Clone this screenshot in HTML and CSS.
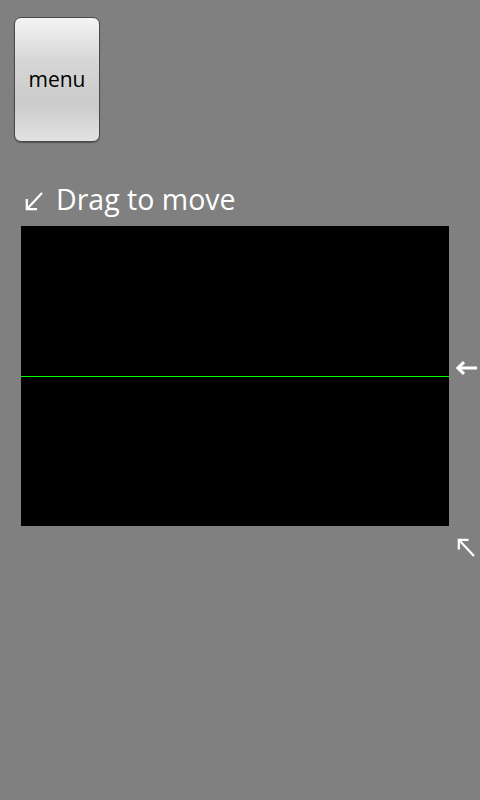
FILE: index.html
```html
<!DOCTYPE html>
<html lang="en">
<head>
    <meta charset="UTF-8">
    <meta name="viewport" content="width=device-width, initial-scale=1.0">
    <title>Drag to move</title>
    <link rel="stylesheet" href="styles.css">
</head>
<body>

<button class="menu-btn">menu</button>

<div class="drag-title">
    <svg class="drag-arrow" width="18" height="19" viewBox="0 0 18 19">
        <path d="M17 1 L2.5 16.5" />
        <path d="M1.8 7 V17.2 H12" />
    </svg>
    <span>Drag to move</span>
</div>

<div class="scope">
    <div class="screen">
        <div class="trace"></div>
    </div>
    <svg class="handle handle-side" width="21" height="14" viewBox="0 0 21 14">
        <path d="M3 7 H21" />
        <path class="head" d="M8 1.2 L2 7 L8 12.8" />
    </svg>
    <svg class="handle handle-corner" width="18" height="19" viewBox="0 0 18 19">
        <path d="M17 18 L2.5 2.5" />
        <path d="M1.8 11.5 V1.8 H11.5" />
    </svg>
</div>

</body>
</html>
```

FILE: styles.css
```css
:root {
    --page-bg: #808080;
    --text-light: #ffffff;
    --trace: #00ff00;
}

body {
    margin: 0;
    padding: 17px 0 0 14px;
    background-color: var(--page-bg);
    font-family: 'Open Sans', 'DejaVu Sans', sans-serif;
    color: var(--text-light);
    min-height: 800px;
    box-sizing: border-box;
}

.menu-btn {
    display: block;
    width: 86px;
    height: 125px;
    padding: 0 0 2px;
    border: 1px solid #4a4a4a;
    border-radius: 7px;
    background: linear-gradient(#f4f4f4 0%, #d6d6d6 35%, #cbcbcb 70%, #e2e2e2 100%);
    box-shadow: 0 1px 1px rgba(0, 0, 0, 0.35);
    font-family: 'Open Sans', 'DejaVu Sans', sans-serif;
    font-size: 21px;
    color: #000;
}

.drag-title {
    display: flex;
    align-items: center;
    gap: 13px;
    margin: 38px 0 0 11px;
    height: 38px;
    font-size: 28.5px;
}

.drag-arrow path,
.handle path {
    fill: none;
    stroke: var(--text-light);
    stroke-width: 2.2;
}

.handle-side path {
    stroke-width: 3;
}

.drag-arrow {
    margin-top: 4px;
}

.scope {
    position: relative;
    margin: 8px 0 0 7px;
    width: 428px;
}

.screen {
    height: 300px;
    background-color: #000;
    display: flex;
    align-items: center;
}

.trace {
    width: 100%;
    height: 1px;
    background-color: var(--trace);
}

.handle {
    position: absolute;
}

.handle-side {
    left: 435px;
    top: 135px;
}

.handle-corner {
    left: 436px;
    top: 312px;
}
```
